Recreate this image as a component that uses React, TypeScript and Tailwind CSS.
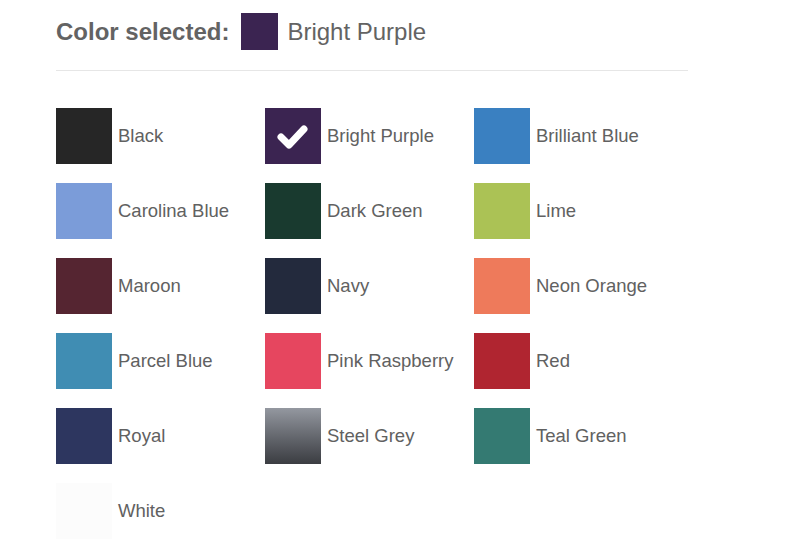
import React from 'react';

type Swatch = {
  name: string;
  bg: string;
  selected?: boolean;
};

const swatches: Swatch[] = [
  { name: 'Black', bg: 'bg-[#262626]' },
  { name: 'Bright Purple', bg: 'bg-[#3b2451]', selected: true },
  { name: 'Brilliant Blue', bg: 'bg-[#3a80c1]' },
  { name: 'Carolina Blue', bg: 'bg-[#7b9cd9]' },
  { name: 'Dark Green', bg: 'bg-[#193a2f]' },
  { name: 'Lime', bg: 'bg-[#abc255]' },
  { name: 'Maroon', bg: 'bg-[#552531]' },
  { name: 'Navy', bg: 'bg-[#232a3d]' },
  { name: 'Neon Orange', bg: 'bg-[#ee7a5b]' },
  { name: 'Parcel Blue', bg: 'bg-[#408db3]' },
  { name: 'Pink Raspberry', bg: 'bg-[#e6465f]' },
  { name: 'Red', bg: 'bg-[#b02530]' },
  { name: 'Royal', bg: 'bg-[#2d365f]' },
  { name: 'Steel Grey', bg: 'bg-gradient-to-b from-[#9498a0] to-[#3b3d42]' },
  { name: 'Teal Green', bg: 'bg-[#347a72]' },
  { name: 'White', bg: 'bg-[#fcfcfc]' },
];

function Check() {
  return (
    <svg viewBox="0 0 56 56" className="h-14 w-14">
      <polyline
        points="16,29 24,37 39,21"
        fill="none"
        stroke="white"
        strokeWidth="7"
        strokeLinecap="round"
        strokeLinejoin="round"
      />
    </svg>
  );
}

export default function App() {
  const selected = swatches.find((s) => s.selected)!;

  return (
    <div className="min-h-screen bg-white px-[56px] pt-[13px] font-['Liberation_Sans',Arial,sans-serif] text-[#616161]">
      {/* Header */}
      <div className="flex h-[37px] items-center">
        <span className="text-[24px] font-bold text-[#636363]">Color selected:</span>
        <span className={`ml-[12px] h-[37px] w-[37px] ${selected.bg}`} />
        <span className="ml-[9px] text-[24px] text-[#636363]">{selected.name}</span>
      </div>

      <div className="mt-[20px] h-px w-[632px] bg-[#e6e6e6]" />

      {/* Swatch grid */}
      <div className="mt-[37px] grid w-[627px] grid-cols-3 gap-y-[19px]">
        {swatches.map((s) => (
          <div key={s.name} className="flex items-center gap-[6px]">
            <div className={`flex h-14 w-14 shrink-0 items-center justify-center ${s.bg}`}>
              {s.selected && <Check />}
            </div>
            <span className="text-[18.5px] leading-none">{s.name}</span>
          </div>
        ))}
      </div>
    </div>
  );
}
